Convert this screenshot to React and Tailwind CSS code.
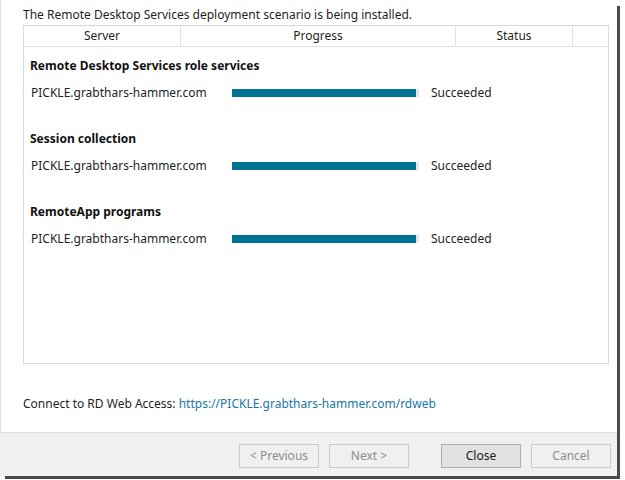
import React from "react";

const groups = [
  { title: "Remote Desktop Services role services", server: "PICKLE.grabthars-hammer.com" },
  { title: "Session collection", server: "PICKLE.grabthars-hammer.com" },
  { title: "RemoteApp programs", server: "PICKLE.grabthars-hammer.com" },
];

const Btn = ({ children, primary, disabled }) => (
  <button
    className={
      primary
        ? "w-[80px] h-[24px] border border-[#adadad] bg-[#e1e1e1] text-[#1a1a1a] text-[12px]"
        : "w-[80px] h-[24px] border border-[#cccccc] bg-[#f0f0f0] text-[#8c8c8c] text-[12px]"
    }
    disabled={disabled}
  >
    {children}
  </button>
);

export default function App() {
  return (
    <div className="w-[625px] h-[480px] bg-white flex flex-col" style={{ fontFamily: '"Noto Sans", "Open Sans", sans-serif' }}>
      <div className="flex h-[476px]">
        <div className="w-[617px] flex flex-col">
          <div className="flex-1 flex flex-col bg-white border-l border-[#e3e3e3] pl-[22px] pr-[8px]">
            <div className="text-[12px] text-[#1e1e1e] leading-[16px] pt-[7px] h-[25px]">
              The Remote Desktop Services deployment scenario is being installed.
            </div>
            <div className="h-[339px] w-[586px] border border-[#d9d9d9] flex flex-col">
              <div className="flex h-[21px] border-b border-[#e0e0e0] text-[12px] text-[#1e1e1e] leading-[20px]">
                <div className="w-[157px] text-center border-r border-[#e0e0e0]">Server</div>
                <div className="w-[275px] text-center border-r border-[#e0e0e0]">Progress</div>
                <div className="w-[117px] text-center border-r border-[#e0e0e0]">Status</div>
                <div className="flex-1"></div>
              </div>
              <div className="flex flex-col pt-[10px]">
                {groups.map((g) => (
                  <div key={g.title} className="flex flex-col h-[73px]">
                    <div className="pl-[6px] text-[12px] font-bold text-[#111] leading-[16px] h-[27px] pt-[1px]">{g.title}</div>
                    <div className="flex items-center h-[16px] pt-[1px] text-[12px] text-[#1e1e1e]">
                      <div className="w-[208px] pl-[7px]">{g.server}</div>
                      <div className="w-[187px] h-[8px] bg-[#e6e6e6] flex">
                        <div className="w-[184px] h-full bg-[#007292]"></div>
                      </div>
                      <div className="pl-[12px]">Succeeded</div>
                    </div>
                  </div>
                ))}
              </div>
            </div>
            <div className="text-[12px] text-[#1e1e1e] leading-[16px] pt-[32px]">
              Connect to RD Web Access: <span className="text-[#1777a6]">https://PICKLE.grabthars-hammer.com/rdweb</span>
            </div>
          </div>
          <div className="h-[44px] bg-[#f0f0f0] border-t border-[#dfdfdf] flex items-start pt-[11px] pl-[239px] gap-[10px]">
            <Btn disabled>&lt; Previous</Btn>
            <Btn disabled>Next &gt;</Btn>
            <div className="w-[12px]"></div>
            <Btn primary>Close</Btn>
            <Btn disabled>Cancel</Btn>
          </div>
        </div>
        <div className="w-[3px] flex flex-col">
          <div className="h-[6px] bg-white"></div>
          <div className="flex-1 bg-[#4a4a4a]"></div>
        </div>
        <div className="flex-1 bg-white"></div>
      </div>
      <div className="h-[3px] flex">
        <div className="w-[5px] bg-white"></div>
        <div className="w-[615px] bg-[#4a4a4a]"></div>
      </div>
    </div>
  );
}
